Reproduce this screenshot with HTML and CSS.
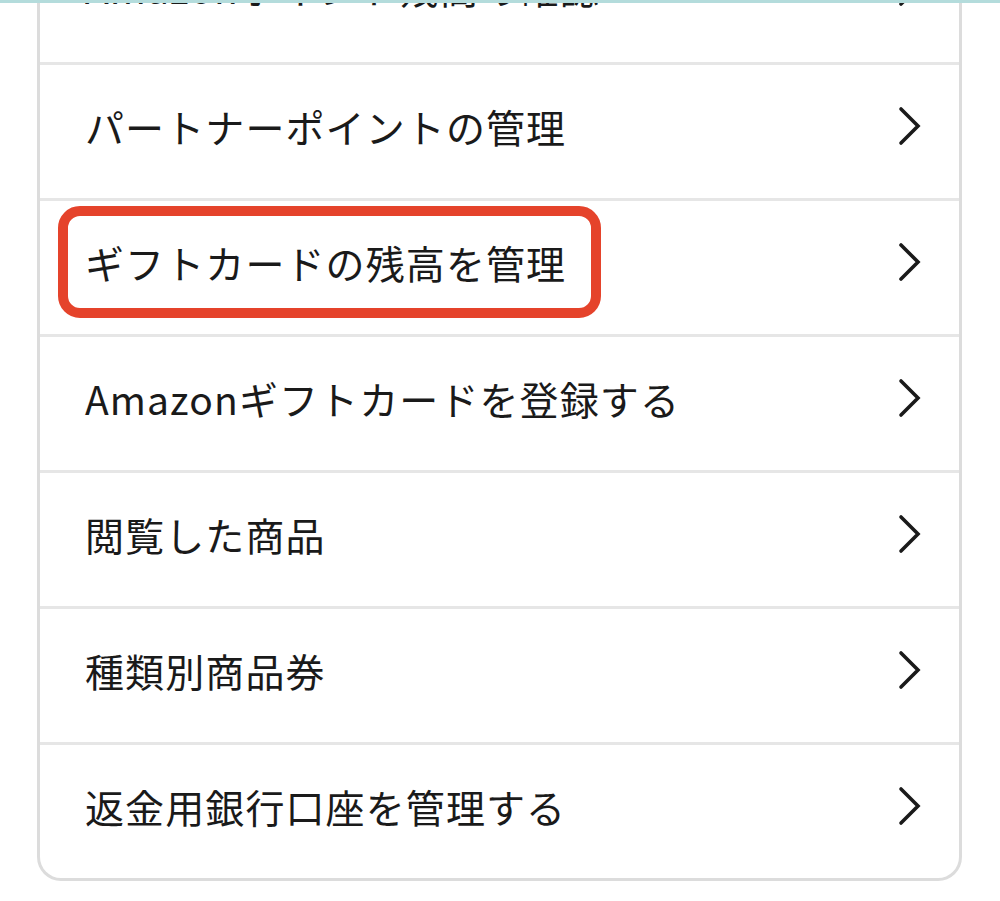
FILE: index.html
```
<!DOCTYPE html>
<html lang="ja">
<head>
    <meta charset="utf-8">
    <title>アカウントサービス</title>
    <link rel="stylesheet" href="styles.css">
</head>
<body>
    <div class="topline"></div>
    <ul class="menu">
        <li class="first"><span class="label">Amazonポイント残高の確認</span><svg class="chev" viewBox="0 0 24 40"><polyline points="3,3 20,20 3,37"/></svg></li>
        <li><span class="label">パートナーポイントの管理</span><svg class="chev" viewBox="0 0 24 40"><polyline points="3,3 20,20 3,37"/></svg></li>
        <li class="marked"><span class="label">ギフトカードの残高を管理</span><span class="highlight"></span><svg class="chev" viewBox="0 0 24 40"><polyline points="3,3 20,20 3,37"/></svg></li>
        <li><span class="label">Amazonギフトカードを登録する</span><svg class="chev" viewBox="0 0 24 40"><polyline points="3,3 20,20 3,37"/></svg></li>
        <li><span class="label">閲覧した商品</span><svg class="chev" viewBox="0 0 24 40"><polyline points="3,3 20,20 3,37"/></svg></li>
        <li><span class="label">種類別商品券</span><svg class="chev" viewBox="0 0 24 40"><polyline points="3,3 20,20 3,37"/></svg></li>
        <li><span class="label">返金用銀行口座を管理する</span><svg class="chev" viewBox="0 0 24 40"><polyline points="3,3 20,20 3,37"/></svg></li>
    </ul>
</body>
</html>
```

FILE: styles.css
```
* {
    margin: 0;
    padding: 0;
    box-sizing: border-box;
}
body {
    background: #ffffff;
    color: #1a1a1a;
    font-family: "Noto Sans CJK JP", "Noto Sans", sans-serif;
    overflow: hidden;
    height: 901px;
}
.topline {
    position: absolute;
    top: 0;
    left: 0;
    right: 0;
    height: 3px;
    background: #b4dcdc;
    z-index: 5;
}
.menu {
    list-style: none;
    margin: -71px 38px 0 37px;
    border: 3px solid #dcdcdc;
    border-top: none;
    border-radius: 0 0 24px 24px;
}
.menu li {
    display: flex;
    align-items: center;
    justify-content: space-between;
    height: 136px;
    padding: 0 37px 12px 45px;
    border-bottom: 3px solid #e6e6e6;
    position: relative;
}
.menu li.first {
    padding-bottom: 18px;
}
.menu li:last-child {
    border-bottom: none;
    height: 133px;
}
.label {
    font-size: 39px;
    font-weight: 400;
    letter-spacing: 1.1px;
}
.chev {
    width: 24px;
    height: 40px;
    fill: none;
    stroke: #1a1a1a;
    stroke-width: 3.6;
    stroke-linecap: round;
    stroke-linejoin: miter;
}
.highlight {
    position: absolute;
    left: 18px;
    top: 5px;
    width: 543px;
    height: 112px;
    border: 10px solid #e5432b;
    border-radius: 22px;
}
```
